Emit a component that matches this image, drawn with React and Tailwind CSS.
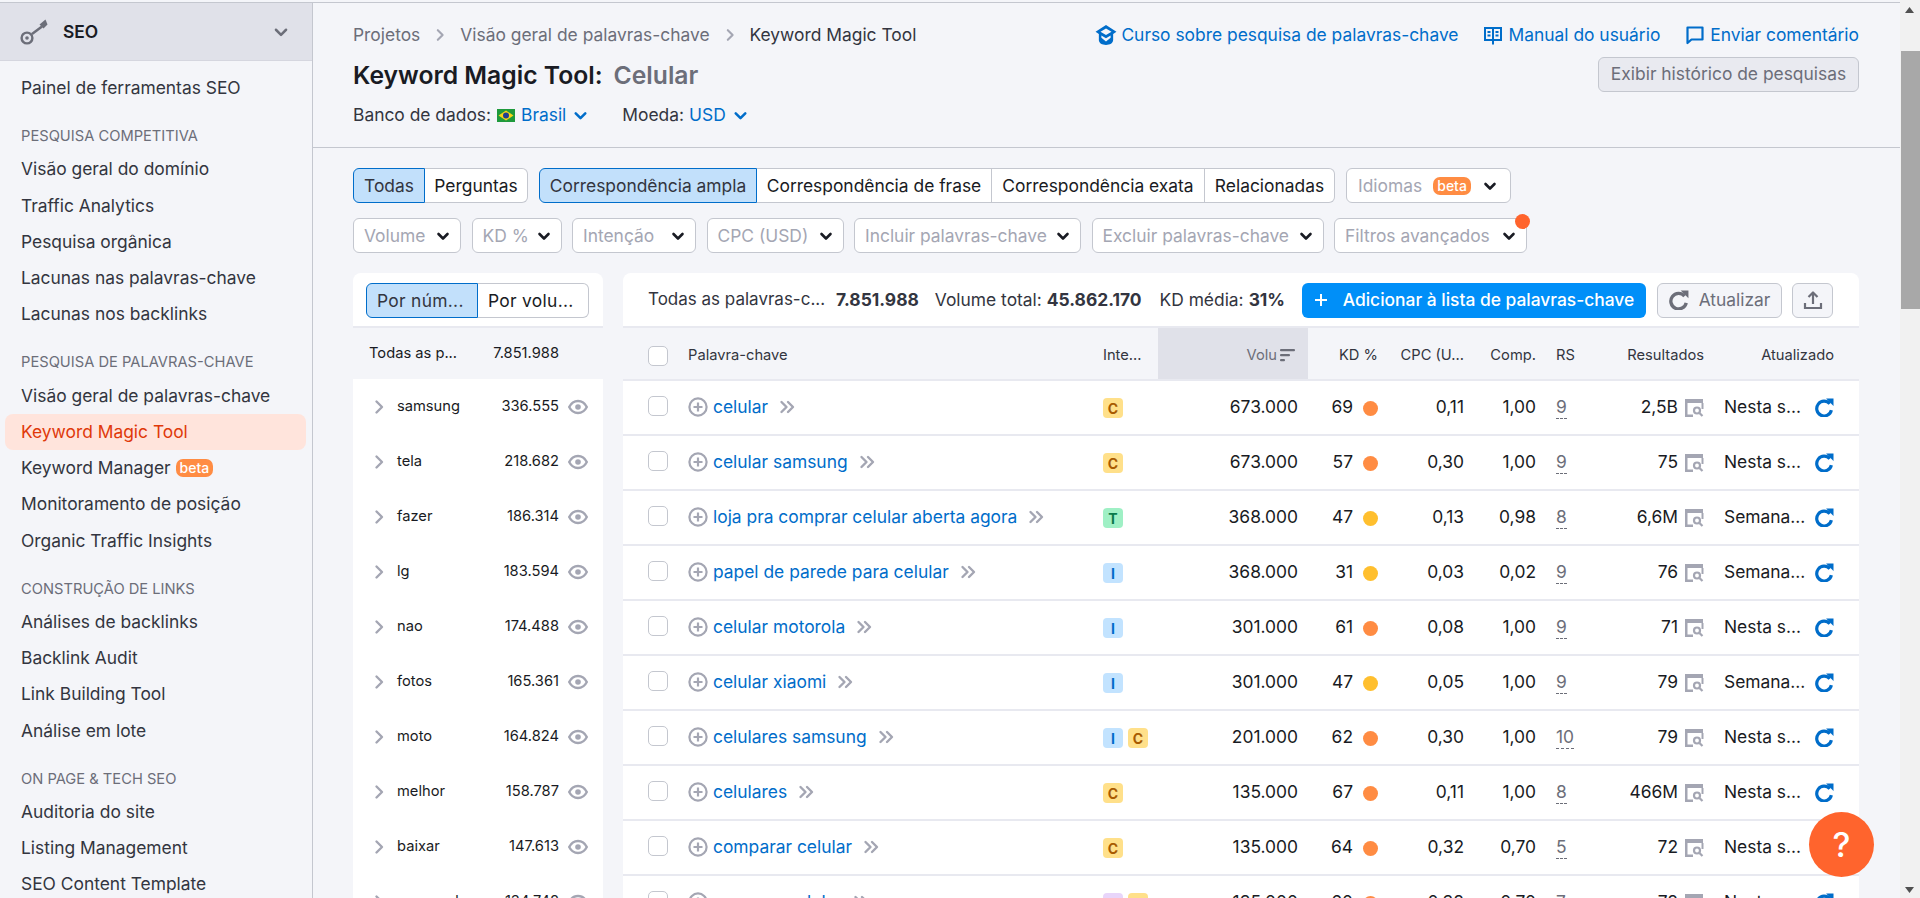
import React from "react";

const Chev = ({ c = "text-[#191b23]", s = 16, w = 2.6 }) => (
  <svg width={s} height={s} viewBox="0 0 16 16" fill="none" stroke="currentColor" strokeWidth={w} strokeLinecap="round" strokeLinejoin="round" className={`shrink-0 ${c}`}>
    <path d="M3.5 6l4.5 4.5L12.5 6" />
  </svg>
);
const ChevR = ({ c = "text-[#a4a6b3]", s = 16 }) => (
  <svg width={s} height={s} viewBox="0 0 16 16" fill="none" stroke="currentColor" strokeWidth="2.4" strokeLinecap="round" strokeLinejoin="round" className={`shrink-0 ${c}`}>
    <path d="M5.5 2.5L11 8l-5.5 5.5" />
  </svg>
);
const KeyIcon = () => (
  <svg width="30" height="28" viewBox="0 0 30 28" fill="none" className="shrink-0 text-[#6c6e79]">
    <circle cx="7" cy="20" r="5.4" stroke="currentColor" strokeWidth="2.4" />
    <circle cx="7" cy="20" r="1.8" fill="currentColor" />
    <path d="M12 16L22 8.500" stroke="currentColor" strokeWidth="2.4" />
    <path d="M19.500 6.500L25.500 1.500l2 5-4 4z" fill="currentColor" />
  </svg>
);
const Cap = () => (
  <svg width="22" height="22" viewBox="0 0 20 20" fill="#006dca" className="shrink-0">
    <path d="M10 1L0.5 7l3 2v5.5c0 2.8 3 4.5 6.5 4.5s6.5-1.700 6.500-4.500V9l3-2L10 1zm0 3l5 3.100-5 3-5-3L10 4zM5.800 10.400L10 13l4.200-2.600v2.200L10 15.800 5.800 12.600v-2.200z" />
  </svg>
);
const Book = () => (
  <svg width="20" height="20" viewBox="0 0 20 20" fill="#006dca" className="shrink-0">
    <path fillRule="evenodd" d="M1 2h18v14h-8v3l-1 1-1-1v-3H1V2zm2 2v10h6V4H3zm8 0v10h6V4h-6z" />
    <path d="M4.5 6h3v2h-3zM4.5 9.5h3v2h-3zM12.5 6h3v2h-3zM12.5 9.5h3v2h-3z" />
  </svg>
);
const Comment = () => (
  <svg width="20" height="20" viewBox="0 0 20 20" fill="none" stroke="#006dca" strokeWidth="2.2" className="shrink-0">
    <path d="M2.5 2.5h15v12H6.500l-4 3.500V2.500z" strokeLinejoin="round" />
  </svg>
);
const Eye = () => (
  <svg width="20" height="20" viewBox="0 0 20 20" fill="none" className="shrink-0 text-[#a4a6b3]">
    <path d="M1.200 10c2-4 5-6 8.800-6s6.800 2 8.800 6c-2 4-5 6-8.800 6s-6.800-2-8.800-6z" stroke="currentColor" strokeWidth="2.400" />
    <circle cx="10" cy="10" r="2.800" fill="currentColor" />
  </svg>
);
const PlusC = () => (
  <svg width="20" height="20" viewBox="0 0 20 20" fill="none" stroke="#a4a6b3" strokeWidth="2.200" className="shrink-0">
    <circle cx="10" cy="10" r="8.600" />
    <path d="M10 5.500v9M5.500 10h9" />
  </svg>
);
const Dbl = () => (
  <svg width="17" height="16" viewBox="0 0 17 16" fill="none" stroke="#a4a6b3" strokeWidth="2.400" strokeLinecap="round" strokeLinejoin="round" className="shrink-0">
    <path d="M2.500 3l5 5-5 5M9 3l5 5-5 5" />
  </svg>
);
const Refresh = ({ c = "#006dca", s = 19, cls = "" }) => (
  <svg width={s} height={s} viewBox="0 0 18 18" fill="none" className={`shrink-0 ${cls}`}>
    <path d="M14 5.500A7 7 0 1 0 15.500 11.500" stroke={c} strokeWidth="3" />
    <path d="M10.500 0.500h7v7z" fill={c} />
  </svg>
);
const Results = () => (
  <svg width="20" height="20" viewBox="0 0 20 20" fill="none" className="shrink-0 mt-[1px]">
    <path d="M1 1h18v4H3.500v11.500H9V19H1V1z" fill="#a4a6b3" />
    <path d="M18.500 5v6" stroke="#a4a6b3" strokeWidth="2" />
    <circle cx="13" cy="12.500" r="3" stroke="#a4a6b3" strokeWidth="2.200" />
    <path d="M15.500 15l3 3" stroke="#a4a6b3" strokeWidth="2.200" />
  </svg>
);
const Upload = () => (
  <svg width="20" height="20" viewBox="0 0 20 20" fill="none" stroke="#6c6e79" strokeWidth="2.200" className="shrink-0">
    <path d="M10 14V3M5.500 7L10 2.500 14.500 7" strokeLinejoin="round" />
    <path d="M2 13v5h16v-5" />
  </svg>
);
const Sort = () => (
  <svg width="16" height="14" viewBox="0 0 16 14" fill="#6c6e79" className="shrink-0">
    <rect x="0" y="1" width="15" height="2.200" rx="1" />
    <rect x="0" y="6" width="10" height="2.200" rx="1" />
    <rect x="0" y="11" width="5" height="2.200" rx="1" />
  </svg>
);
const Flag = () => (
  <svg width="18" height="13" viewBox="0 0 18 13" className="shrink-0">
    <rect width="18" height="13" fill="#1f9a3c" />
    <path d="M9 1.500L16.500 6.500 9 11.500 1.500 6.500z" fill="#f7d417" />
    <circle cx="9" cy="6.500" r="3" fill="#1f3f8f" />
  </svg>
);
const Beta = () => (
  <span className="inline-flex items-center justify-center h-[18px] px-[4px] rounded-[7px] bg-[#ff8c43] text-white text-[14px] font-medium leading-none">beta</span>
);

const nav = [
  { items: ["Painel de ferramentas SEO"] },
  { title: "PESQUISA COMPETITIVA", items: ["Visão geral do domínio", "Traffic Analytics", "Pesquisa orgânica", "Lacunas nas palavras-chave", "Lacunas nos backlinks"] },
  { title: "PESQUISA DE PALAVRAS-CHAVE", items: ["Visão geral de palavras-chave", "Keyword Magic Tool", "Keyword Manager", "Monitoramento de posição", "Organic Traffic Insights"] },
  { title: "CONSTRUÇÃO DE LINKS", items: ["Análises de backlinks", "Backlink Audit", "Link Building Tool", "Análise em lote"] },
  { title: "ON PAGE & TECH SEO", items: ["Auditoria do site", "Listing Management", "SEO Content Template"] },
];

function Sidebar() {
  return (
    <aside className="w-[313px] shrink-0 border-r border-[#c4c7cf] h-full overflow-hidden bg-[#f4f5f9]">
      <div className="h-[58px] bg-[#e0e1e9] border-b border-[#d5d6df] flex items-center pl-[20px] pr-[22px] gap-[13px]">
        <KeyIcon />
        <span className="text-[17.4px] font-semibold text-[#191b23] flex-1 pt-[1px]">SEO</span>
        <Chev c="text-[#6c6e79]" s={18} w={2.2} />
      </div>
      <div className="pt-[9px] pl-[5px] pr-[6px]">
        {nav.map((g, i) => (
          <div key={i}>
            {g.title && (
              <div className="mt-[15px] h-[30px] pl-[16px] flex items-center text-[14.7px] text-[#6c6e79] whitespace-nowrap">{g.title}</div>
            )}
            {g.items.map((it) => {
              const active = it === "Keyword Magic Tool";
              return (
                <div key={it} className={`h-[36.25px] pl-[16px] flex items-center gap-[5px] text-[17.4px] whitespace-nowrap rounded-[8px] ${active ? "bg-[#ffe4dc] text-[#e0390a]" : "text-[#333540]"}`}>
                  {it}
                  {it === "Keyword Manager" && <Beta />}
                </div>
              );
            })}
          </div>
        ))}
      </div>
    </aside>
  );
}

const Tab = ({ on, children, cls = "" }) => (
  <div className={`h-[35px] pt-[1px] flex items-center justify-center text-[17.4px] whitespace-nowrap border ${on ? "bg-[#c2e0fb] border-[#006dca] text-[#333540]" : "bg-white border-[#c4c7cf] text-[#191b23]"} ${cls}`}>{children}</div>
);

const Sel = ({ w, label }) => (
  <div className={`h-[35px] bg-white border border-[#c4c7cf] rounded-[6px] flex items-center justify-between pl-[10px] pr-[9px] text-[17.4px] text-[#a4a6b3] whitespace-nowrap ${w}`}>
    <span className="pt-[1px]">{label}</span>
    <Chev />
  </div>
);

const leftRows = [
  ["samsung", "336.555"], ["tela", "218.682"], ["fazer", "186.314"], ["lg", "183.594"], ["nao", "174.488"],
  ["fotos", "165.361"], ["moto", "164.824"], ["melhor", "158.787"], ["baixar", "147.613"], ["comprador", "134.748"],
];

const rows = [
  ["celular", ["C"], "673.000", "69", "o", "0,11", "1,00", "9", "2,5B", "Nesta s..."],
  ["celular samsung", ["C"], "673.000", "57", "o", "0,30", "1,00", "9", "75", "Nesta s..."],
  ["loja pra comprar celular aberta agora", ["T"], "368.000", "47", "y", "0,13", "0,98", "8", "6,6M", "Semana..."],
  ["papel de parede para celular", ["I"], "368.000", "31", "y", "0,03", "0,02", "9", "76", "Semana..."],
  ["celular motorola", ["I"], "301.000", "61", "o", "0,08", "1,00", "9", "71", "Nesta s..."],
  ["celular xiaomi", ["I"], "301.000", "47", "y", "0,05", "1,00", "9", "79", "Semana..."],
  ["celulares samsung", ["I", "C"], "201.000", "62", "o", "0,30", "1,00", "10", "79", "Nesta s..."],
  ["celulares", ["C"], "135.000", "67", "o", "0,11", "1,00", "8", "466M", "Nesta s..."],
  ["comparar celular", ["C"], "135.000", "64", "o", "0,32", "0,70", "5", "72", "Nesta s..."],
  ["comprar celular", ["N", "C"], "135.000", "60", "o", "0,38", "0,70", "7", "78", "Nesta s..."],
];

const badgeCls = {
  C: "bg-[#ffe08a] text-[#a85a00]",
  T: "bg-[#9ff0c5] text-[#0a7a4b]",
  I: "bg-[#c2e3ff] text-[#006dca]",
  N: "bg-[#e8d5fa] text-[#7a3fb5]",
};

const Box = () => <div className="w-[20px] h-[20px] bg-white border border-[#c4c7cf] rounded-[5px] shrink-0" />;

function Row({ r }) {
  return (
    <div className="h-[55px] shrink-0 flex items-center border-b-2 border-[#e8e9f0] text-[17.4px] text-[#191b23]">
      <div className="pl-[25px] pr-[20px] shrink-0 mb-[3px]"><Box /></div>
      <div className="w-[415px] shrink-0 flex items-center whitespace-nowrap">
        <PlusC />
        <span className="ml-[5px] text-[#006dca]">{r[0]}</span>
        <span className="ml-[11px]"><Dbl /></span>
      </div>
      <div className="w-[55px] shrink-0 flex gap-[5px] mt-[1px]">
        {r[1].map((b) => (
          <span key={b} className={`w-[20px] h-[20px] rounded-[4px] flex items-center justify-center text-[14px] font-bold ${badgeCls[b]}`}>{b === "N" ? "" : b}</span>
        ))}
      </div>
      <div className="w-[150px] shrink-0 text-right pr-[10px]">{r[2]}</div>
      <div className="w-[70px] shrink-0 flex items-center justify-end">
        <span>{r[3]}</span>
        <span className={`ml-[10px] mt-[2px] w-[15px] h-[15px] rounded-full ${r[4] === "o" ? "bg-[#ff8c43]" : "bg-[#ffbf2e]"}`} />
      </div>
      <div className="w-[86px] shrink-0 text-right">{r[5]}</div>
      <div className="w-[72px] shrink-0 text-right">{r[6]}</div>
      <div className="w-[69px] shrink-0 pl-[20px]">
        <span className="text-[#6c6e79] border-b border-dashed border-[#6c6e79] leading-[22px] inline-block">{r[7]}</span>
      </div>
      <div className="w-[99px] shrink-0 flex items-center justify-end gap-[6px]">
        <span>{r[8]}</span>
        <Results />
      </div>
      <div className="w-[130px] shrink-0 pl-[20px] flex items-center justify-between whitespace-nowrap">
        <span>{r[9]}</span>
        <Refresh cls="mt-[1px]" />
      </div>
    </div>
  );
}

export default function App() {
  return (
    <div className="relative w-[1920px] h-[898px] overflow-hidden flex flex-col bg-[#f4f5f9] font-[family-name:Inter,sans-serif]">
      <div className="h-[3px] shrink-0 border-b border-[#c4c7cf] w-[1900px]" />
      <div className="flex flex-1 min-h-0">
        <Sidebar />
        <main className="w-[1587px] shrink-0 flex flex-col min-h-0">
          <header className="h-[145px] shrink-0 border-b border-[#c4c7cf] pl-[40px] pr-[41px] flex justify-between">
            <div className="pt-[20px]">
              <div className="h-[24px] flex items-center text-[17.4px] text-[#6c6e79] whitespace-nowrap">
                <span>Projetos</span>
                <span className="mx-[13px]"><ChevR s={14} /></span>
                <span>Visão geral de palavras-chave</span>
                <span className="mx-[13px]"><ChevR s={14} /></span>
                <span className="text-[#333540]">Keyword Magic Tool</span>
              </div>
              <div className="mt-[13px] h-[32px] flex items-center text-[24.7px] font-semibold whitespace-nowrap">
                <span className="text-[#191b23]">Keyword Magic Tool:</span>
                <span className="ml-[11px] text-[#6c6e79]">Celular</span>
              </div>
              <div className="mt-[11px] h-[24px] flex items-center text-[17.4px] text-[#333540] whitespace-nowrap">
                <span>Banco de dados:</span>
                <span className="ml-[6px]"><Flag /></span>
                <span className="ml-[6px] text-[#006dca]">Brasil</span>
                <span className="ml-[6px]"><Chev c="text-[#006dca]" s={17} w={2.4} /></span>
                <span className="ml-[33px]">Moeda:</span>
                <span className="ml-[5px] text-[#006dca]">USD</span>
                <span className="ml-[6px]"><Chev c="text-[#006dca]" s={17} w={2.4} /></span>
              </div>
            </div>
            <div className="pt-[20px] flex flex-col items-end">
              <div className="h-[24px] flex items-center text-[17.4px] text-[#006dca] whitespace-nowrap">
                <Cap /><span className="ml-[4px]">Curso sobre pesquisa de palavras-chave</span>
                <span className="ml-[25px]"><Book /></span><span className="ml-[5px]">Manual do usuário</span>
                <span className="ml-[25px]"><Comment /></span><span className="ml-[5px]">Enviar comentário</span>
              </div>
              <div className="mt-[10px] h-[35px] w-[261px] flex items-center justify-center rounded-[6px] border border-[#c4c7cf] bg-[#e9eaf0] text-[17.4px] text-[#6c6e79] whitespace-nowrap">
                Exibir histórico de pesquisas
              </div>
            </div>
          </header>

          <div className="pt-[20px] pl-[40px] pr-[40px] shrink-0">
            <div className="flex items-center">
              <Tab on cls="w-[72px] rounded-l-[6px]">Todas</Tab>
              <Tab cls="w-[103px] rounded-r-[6px] border-l-0">Perguntas</Tab>
              <Tab on cls="w-[218px] ml-[11px] rounded-l-[6px]">Correspondência ampla</Tab>
              <Tab cls="w-[235px] border-l-0">Correspondência de frase</Tab>
              <Tab cls="w-[213px] border-l-0">Correspondência exata</Tab>
              <Tab cls="w-[130px] rounded-r-[6px] border-l-0">Relacionadas</Tab>
              <div className="ml-[11px] w-[165px] h-[35px] bg-white border border-[#c4c7cf] rounded-[6px] flex items-center justify-between pl-[11px] pr-[12px] text-[17.4px] text-[#a4a6b3]">
                <span className="pt-[1px]">Idiomas</span>
                <Beta />
                <Chev />
              </div>
            </div>
            <div className="relative mt-[15px] flex items-center gap-[10.5px]">
              <Sel w="w-[108px]" label="Volume" />
              <Sel w="w-[90px]" label="KD %" />
              <Sel w="w-[124px]" label="Intenção" />
              <Sel w="w-[137px]" label="CPC (USD)" />
              <Sel w="w-[227px]" label="Incluir palavras-chave" />
              <Sel w="w-[232px]" label="Excluir palavras-chave" />
              <div className="relative">
                <Sel w="w-[193px]" label="Filtros avançados" />
                <span className="absolute -top-[4px] -right-[3px] w-[15px] h-[15px] rounded-full bg-[#ff642d]" />
              </div>
            </div>
          </div>

          <div className="mt-[20px] pl-[40px] pr-[41px] flex gap-[20px] items-start min-h-0 flex-1 overflow-hidden">
            <section className="w-[250px] shrink-0 bg-white rounded-t-[8px]">
              <div className="h-[55px] flex items-start pt-[10px] pl-[13px] border-b-2 border-[#e8e9f0]">
                <Tab on cls="w-[112px] rounded-l-[6px] justify-start! pl-[10px] tracking-[0.3px]">Por núm...</Tab>
                <Tab cls="w-[111px] rounded-r-[6px] border-l-0 justify-start! pl-[10px] tracking-[0.3px]">Por volu...</Tab>
              </div>
              <div className="h-[51px] bg-[#f4f5f9] flex items-center text-[14.7px] text-[#191b23] whitespace-nowrap">
                <span className="pl-[16px] w-[133px]">Todas as p...</span>
                <span className="w-[73px] text-right">7.851.988</span>
              </div>
              {leftRows.map(([k, v]) => (
                <div key={k} className="h-[55px] flex items-center text-[14.7px] text-[#191b23] whitespace-nowrap">
                  <span className="pl-[18px] w-[44px]"><ChevR /></span>
                  <span className="w-[100px]">{k}</span>
                  <span className="w-[62px] text-right">{v}</span>
                  <span className="ml-[9px]"><Eye /></span>
                </div>
              ))}
            </section>

            <section className="w-[1236px] shrink-0 bg-white rounded-t-[8px] flex flex-col">
              <div className="h-[55px] shrink-0 flex items-center pt-[1px] pl-[25px] pr-[26px] border-b-2 border-[#e8e9f0] text-[17.4px] text-[#333540] whitespace-nowrap">
                <span className="text-[17px]">Todas as palavras-c...</span>
                <span className="ml-[11px] font-bold">7.851.988</span>
                <span className="ml-[16px]">Volume total:</span>
                <span className="ml-[5px] font-bold">45.862.170</span>
                <span className="ml-[18px]">KD média:</span>
                <span className="ml-[5px] font-bold">31%</span>
                <div className="ml-auto h-[35px] w-[344px] rounded-[6px] bg-[#008ff8] text-white font-medium flex items-center justify-center gap-[15px]">
                  <svg width="14" height="14" viewBox="0 0 14 14" stroke="#fff" strokeWidth="2"><path d="M7 1v12M1 7h12" /></svg>
                  Adicionar à lista de palavras-chave
                </div>
                <div className="ml-[11px] h-[35px] w-[125px] rounded-[6px] border border-[#c4c7cf] bg-[#f4f5f9] text-[#6c6e79] flex items-center justify-center gap-[10px]">
                  <Refresh c="#6c6e79" s={20} />
                  Atualizar
                </div>
                <div className="ml-[10px] h-[35px] w-[41px] rounded-[6px] border border-[#c4c7cf] bg-[#f4f5f9] flex items-center justify-center">
                  <Upload />
                </div>
              </div>
              <div className="h-[53px] shrink-0 bg-[#f4f5f9] flex items-center border-b-2 border-[#e8e9f0] text-[14.7px] text-[#333540] whitespace-nowrap">
                <div className="pl-[25px] pr-[20px] shrink-0 mt-[4px]"><Box /></div>
                <div className="w-[415px] shrink-0 mt-[3px]">Palavra-chave</div>
                <div className="w-[55px] shrink-0 mt-[3px]">Inte...</div>
                <div className="w-[150px] shrink-0 self-stretch bg-[#e0e1e9] flex items-center justify-end pt-[3px] pr-[12px] gap-[3px]">
                  <span className="text-[#6c6e79]">Volu</span><Sort />
                </div>
                <div className="w-[70px] shrink-0 text-right mt-[3px]">KD %</div>
                <div className="w-[86px] shrink-0 text-right mt-[3px]">CPC (U...</div>
                <div className="w-[72px] shrink-0 text-right mt-[3px]">Comp.</div>
                <div className="w-[69px] shrink-0 pl-[20px] mt-[3px]">RS</div>
                <div className="w-[99px] shrink-0 text-right mt-[3px]">Resultados</div>
                <div className="w-[130px] shrink-0 text-right mt-[3px]">Atualizado</div>
              </div>
              {rows.map((r) => <Row key={r[0]} r={r} />)}
            </section>
          </div>
        </main>

        <div className="w-[20px] shrink-0 bg-[#f1f1f1] relative -mt-[3px] h-[898px]">
          <svg width="20" height="898" className="absolute top-0 left-0" viewBox="0 0 20 898">
            <path d="M9.500 7l4.500 6h-9z" fill="#505050" />
            <path d="M9.500 893l-4.500-6h9z" fill="#505050" />
          </svg>
          <div className="absolute top-[51px] left-[1px] w-[19px] h-[258px] bg-[#a8a8a8]" />
        </div>
      </div>

      <div className="absolute left-[1809px] top-[812px] w-[65px] h-[65px] rounded-full bg-[#ff642d] flex items-center justify-center text-white text-[34px] font-medium">?</div>
    </div>
  );
}
